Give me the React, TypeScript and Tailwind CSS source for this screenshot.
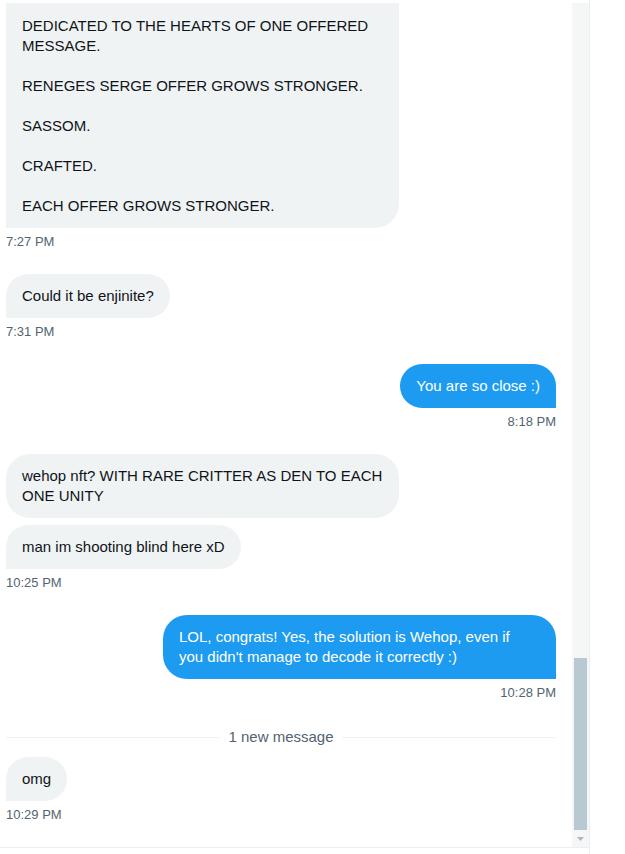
import React from "react";

type Side = "in" | "out";

interface Bubble {
  text: string;
  square?: boolean;
  wide?: boolean;
}

function MessageBubble({ side, bubble }: { side: Side; bubble: Bubble }) {
  const base =
    "px-4 py-3 text-[15px] leading-5 whitespace-pre max-w-[393px] rounded-3xl";
  const color =
    side === "in" ? "bg-[#eff3f4] text-[#0f1419]" : "bg-[#1d9bf0] text-white";
  const corner = bubble.square
    ? side === "in"
      ? "rounded-bl-none"
      : "rounded-br-none"
    : "";
  const width = bubble.wide ? "w-[393px]" : "";
  return (
    <div className={`${base} ${color} ${corner} ${width}`}>{bubble.text}</div>
  );
}

function Time({ side, value }: { side: Side; value: string }) {
  return (
    <div
      className={`mt-[6px] h-4 text-[13px] leading-4 text-[#536471] ${
        side === "out" ? "self-end" : "self-start"
      }`}
    >
      {value}
    </div>
  );
}

function MessageGroup({
  side,
  bubbles,
  time,
  className = "mt-6",
}: {
  side: Side;
  bubbles: Bubble[];
  time: string;
  className?: string;
}) {
  return (
    <div
      className={`${className} flex flex-col ${
        side === "out" ? "items-end" : "items-start"
      }`}
    >
      <div
        className={`flex flex-col gap-[7px] ${
          side === "out" ? "items-end" : "items-start"
        }`}
      >
        {bubbles.map((b, i) => (
          <MessageBubble key={i} side={side} bubble={b} />
        ))}
      </div>
      <Time side={side} value={time} />
    </div>
  );
}

export default function App() {
  return (
    <div
      className="w-[625px] h-[854px] bg-white flex overflow-hidden"
      style={{ fontFamily: '"Liberation Sans", Arial, sans-serif' }}
    >
      <div className="w-[590px] h-full border-r border-[#eceff1]">
        <div className="h-[848px] flex border-b border-[#eceff1]">
          {/* Messages */}
          <div className="w-[572px] pl-[6px] pr-4 pt-[3px] flex flex-col overflow-hidden">
            {/* first bubble, scrolled partly out of view */}
            <div className="flex flex-col items-start">
              <div className="w-[393px] px-4 pt-[13px] pb-3 bg-[#eff3f4] text-[#0f1419] text-[15px] leading-5 whitespace-pre rounded-br-3xl">
                {"DEDICATED TO THE HEARTS OF ONE OFFERED\nMESSAGE.\n\nRENEGES SERGE OFFER GROWS STRONGER.\n\nSASSOM.\n\nCRAFTED.\n\nEACH OFFER GROWS STRONGER."}
              </div>
              <Time side="in" value="7:27 PM" />
            </div>

            <MessageGroup
              side="in"
              bubbles={[{ text: "Could it be enjinite?", square: true }]}
              time="7:31 PM"
            />

            <MessageGroup
              side="out"
              bubbles={[{ text: "You are so close :)", square: true }]}
              time="8:18 PM"
            />

            <MessageGroup
              side="in"
              bubbles={[
                {
                  text: "wehop nft? WITH RARE CRITTER AS DEN TO EACH\nONE UNITY",
                  wide: true,
                },
                { text: "man im shooting blind here xD", square: true },
              ]}
              time="10:25 PM"
            />

            <MessageGroup
              side="out"
              bubbles={[
                {
                  text: "LOL, congrats! Yes, the solution is Wehop, even if\nyou didn't manage to decode it correctly :)",
                  square: true,
                  wide: true,
                },
              ]}
              time="10:28 PM"
            />

            {/* New message divider */}
            <div className="mt-[26px] flex items-center gap-2 h-5">
              <div className="flex-1 h-px bg-[#eff3f4]" />
              <span className="text-[15px] leading-5 text-[#536471]">
                1 new message
              </span>
              <div className="flex-1 h-px bg-[#eff3f4]" />
            </div>

            <MessageGroup
              side="in"
              bubbles={[{ text: "omg", square: true }]}
              time="10:29 PM"
              className="mt-[10px]"
            />
          </div>

          {/* Scrollbar */}
          <div className="w-[17px] mt-[3px] bg-[#f5f7f7] flex flex-col">
            <div className="h-[655px]" />
            <div className="mx-[2px] h-[172px] bg-[#b9c9d1]" />
            <div className="h-[17px] flex items-center justify-center">
              <svg width="7" height="4" viewBox="0 0 7 4">
                <path d="M0 0 H7 L3.5 4 Z" fill="#a9b8c0" />
              </svg>
            </div>
          </div>
        </div>
      </div>
    </div>
  );
}
